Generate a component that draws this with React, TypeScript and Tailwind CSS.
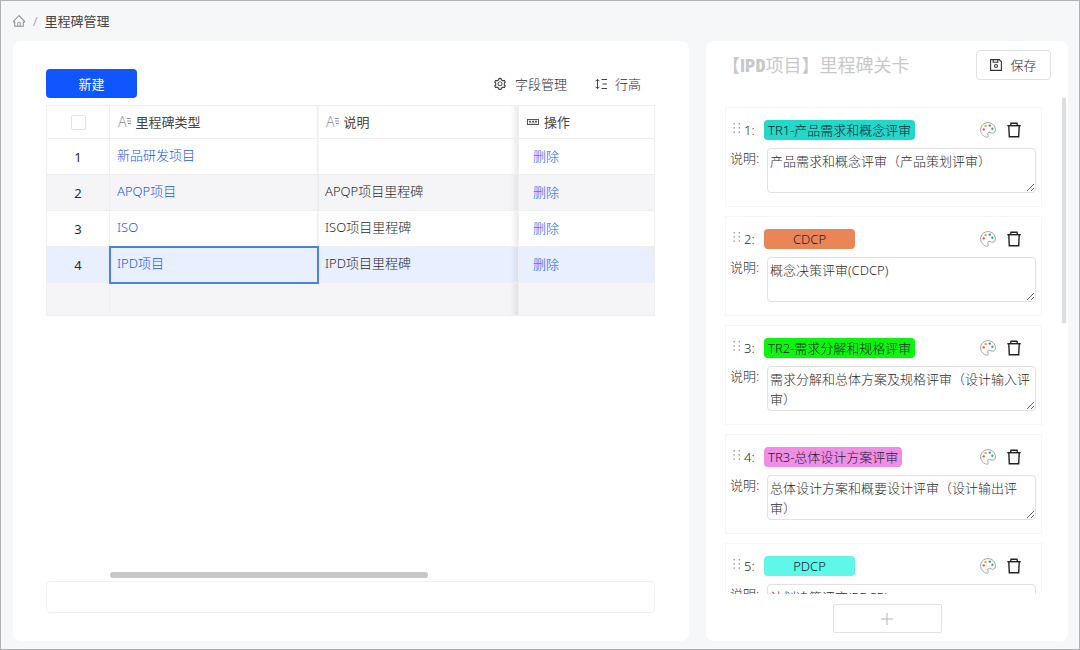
import React, { useState } from 'react';
import { AiOutlineHome, AiOutlineSetting } from 'react-icons/ai';

interface MilestoneType {
  id: number;
  name: string;
  remark: string;
}

interface Gate {
  id: number;
  name: string;
  color: string;
  remark: string;
}

const milestoneTypes: MilestoneType[] = [
  { id: 1, name: '新品研发项目', remark: '' },
  { id: 2, name: 'APQP项目', remark: 'APQP项目里程碑' },
  { id: 3, name: 'ISO', remark: 'ISO项目里程碑' },
  { id: 4, name: 'IPD项目', remark: 'IPD项目里程碑' },
];

const gates: Gate[] = [
  { id: 1, name: 'TR1-产品需求和概念评审', color: 'bg-[#22d8c8]', remark: '产品需求和概念评审（产品策划评审）' },
  { id: 2, name: 'CDCP', color: 'bg-[#ea8558]', remark: '概念决策评审(CDCP)' },
  { id: 3, name: 'TR2-需求分解和规格评审', color: 'bg-[#0af60a]', remark: '需求分解和总体方案及规格评审（设计输入评审）' },
  { id: 4, name: 'TR3-总体设计方案评审', color: 'bg-[#f08ee6]', remark: '总体设计方案和概要设计评审（设计输出评审）' },
  { id: 5, name: 'PDCP', color: 'bg-[#5ff7ea]', remark: '计划决策评审(PDCP)' },
];

const TextFieldIcon: React.FC = () => (
  <span className="flex items-start text-[#999]" aria-hidden="true">
    <span className="text-sm leading-3 font-light">A</span>
    <svg className="h-2.5 w-1" viewBox="0 0 4 10" stroke="currentColor" strokeWidth="1">
      <path d="M0 2.5h4M0 5h4M1 7.5h3" />
    </svg>
  </span>
);

const ActionFieldIcon: React.FC = () => (
  <svg className="h-3 w-3" viewBox="0 0 12 12" fill="none" stroke="#555" aria-hidden="true">
    <rect x="0.5" y="3.5" width="11" height="5" />
    <path d="M2 5.5h2M5 5.5h2M8 5.5h2" strokeWidth="1.4" />
    <path d="M2 7h8" strokeWidth="0.5" />
  </svg>
);

const RowHeightIcon: React.FC = () => (
  <svg className="h-3 w-3" viewBox="0 0 12 12" fill="none" stroke="#444" strokeWidth="1" aria-hidden="true">
    <path d="M2.5 1.5v9M0.5 3.3l2-2 2 2M0.5 8.7l2 2 2-2" />
    <path d="M6.5 1.5H12M7.5 6H12M6.5 10.5H12" />
  </svg>
);

const SaveIcon: React.FC = () => (
  <svg className="h-3 w-3" viewBox="0 0 12 12" fill="none" stroke="#333" strokeWidth="1.1" aria-hidden="true">
    <path d="M0.6 0.6h8.6l2.2 2.2v8.6H0.6z" />
    <path d="M3.2 0.6v2.6h4.6V0.6" />
    <circle cx="6" cy="7" r="1.5" />
  </svg>
);

const DragIcon: React.FC = () => (
  <svg className="h-3 w-2" viewBox="0 0 8 12" fill="#999" aria-hidden="true">
    {[1, 5.2, 9.4].map((y) => (
      <g key={y}>
        <rect x="0.5" y={y} width="1.4" height="1.4" />
        <rect x="5.6" y={y} width="1.4" height="1.4" />
      </g>
    ))}
  </svg>
);

const PaletteIcon: React.FC = () => (
  <svg className="h-4 w-4" viewBox="0 0 16 16" fill="none" aria-hidden="true">
    <path
      d="M8 0.6C3.9 0.6 0.6 3.8 0.6 7.8c0 3.6 2.8 6.8 6.2 7.4 1 .2 1.5-.5 1.3-1.4-.3-1.3-.8-2.5.3-3.3.9-.6 2 .1 3.1.5 1.5.6 3.9.2 3.9-3.2C15.4 3.8 12.1.6 8 .6z"
      stroke="#8c8c8c"
      strokeWidth="0.8"
    />
    <circle cx="3.7" cy="7.4" r="1.2" fill="#e25b52" />
    <circle cx="5.6" cy="3.9" r="1.2" fill="#efa43a" />
    <circle cx="9.8" cy="3.6" r="1.2" fill="#3a86c0" />
    <circle cx="12.4" cy="6.7" r="1.2" fill="#35b08f" />
  </svg>
);

const TrashIcon: React.FC = () => (
  <svg className="h-4 w-4" viewBox="0 0 16 16" fill="none" stroke="#222" strokeWidth="1.4" aria-hidden="true">
    <path d="M1.3 3.7h13.4" />
    <path d="M4.6 3.5l.4-2.3h6l.4 2.3" />
    <path d="M2.8 3.7l.5 11h9.4l.5-11" />
  </svg>
);

const cell = 'border border-[#efeff1]';
const pinShadow = 'bg-[linear-gradient(to_left,#00000014,transparent_8px)]';

const MilestoneTable: React.FC<{ selected: number; onSelect: (id: number) => void }> = ({ selected, onSelect }) => (
  <table className="w-full table-fixed border-collapse">
    <colgroup>
      <col className="w-[63px]" />
      <col className="w-[208px]" />
      <col />
      <col className="w-[136px]" />
    </colgroup>
    <thead>
      <tr className="h-[33px] text-[#444]">
        <th className={cell}>
          <input
            type="checkbox"
            aria-label="全选"
            className="mx-auto block h-[15px] w-[15px] appearance-none rounded-xs border border-[#e2e3e5] bg-white"
          />
        </th>
        <th className={`${cell} px-2 font-normal`}>
          <div className="flex items-center gap-[5px]"><TextFieldIcon />里程碑类型</div>
        </th>
        <th className={`${cell} ${pinShadow} px-2 font-normal`}>
          <div className="flex items-center gap-[5px]"><TextFieldIcon />说明</div>
        </th>
        <th className={`${cell} px-2 font-normal`}>
          <div className="flex items-center gap-[5px]"><ActionFieldIcon />操作</div>
        </th>
      </tr>
    </thead>
    <tbody>
      {milestoneTypes.map((row) => {
        const isSelected = row.id === selected;
        return (
          <tr
            key={row.id}
            onClick={() => onSelect(row.id)}
            className={`h-9 ${isSelected ? 'bg-[#e8efff]' : 'even:bg-[#f5f5f8]'}`}
          >
            <td className={`${cell} text-center font-normal`}>{row.id}</td>
            <td className={`${cell} px-[7px] pb-1 ${isSelected ? 'outline-2 -outline-offset-1 outline-[#4583e6]' : ''}`}>
              <a href="#" className="text-[#1a58ee]">{row.name}</a>
            </td>
            <td className={`${cell} ${pinShadow} px-[7px] pb-1`}>{row.remark}</td>
            <td className={`${cell} px-3.5 pb-0.5`}>
              <button type="button" className="text-[#1a58ee]">删除</button>
            </td>
          </tr>
        );
      })}
      <tr className="h-[33px] bg-[#f5f5f8]">
        <td className={cell}></td>
        <td className="border-b border-[#efeff1]"></td>
        <td className={`border-b border-[#efeff1] ${pinShadow}`}></td>
        <td className={cell}></td>
      </tr>
    </tbody>
  </table>
);

const GateCard: React.FC<{ gate: Gate }> = ({ gate }) => (
  <li className="h-[100px] border border-[#f6f6f7] pt-3 pr-[5px] pl-1">
    <div className="flex h-5 items-center">
      <span className="flex w-[34px] items-center gap-[3px] pl-[3px]">
        <span className="pb-1"><DragIcon /></span>
        <span>{gate.id}:</span>
      </span>
      <span className={`min-w-[91px] rounded-sm px-1 text-center leading-5 text-[#16222b] ${gate.color}`}>{gate.name}</span>
      <div className="ml-auto flex gap-2.5 pr-3.5">
        <button type="button" aria-label="选择颜色"><PaletteIcon /></button>
        <button type="button" aria-label="删除关卡"><TrashIcon /></button>
      </div>
    </div>
    <div className="mt-2 flex">
      <label htmlFor={`gate-${gate.id}`} className="w-[37px] shrink-0 leading-5 whitespace-nowrap">说明:</label>
      <textarea
        id={`gate-${gate.id}`}
        defaultValue={gate.remark}
        className="block h-[45px] min-w-0 flex-1 overflow-hidden rounded-sm border border-[#e0e1e3] bg-white px-0.5 py-0.5 leading-5"
      />
    </div>
  </li>
);

const App: React.FC = () => {
  const [selected, setSelected] = useState(4);

  return (
    <div className="flex h-screen flex-col border border-[#b0b1b4] bg-[#f6f7f9] font-['Noto_Sans','Noto_Sans_CJK_SC',sans-serif] text-[13px] leading-5 font-light text-[#2b2b2b]">
      {/* Breadcrumb */}
      <nav className="flex h-10 shrink-0 items-center gap-[7px] px-[11px]" aria-label="breadcrumb">
        <a href="#" aria-label="首页"><AiOutlineHome className="h-3.5 w-3.5 text-[#8a8c90]" /></a>
        <span className="text-[#888]">/</span>
        <span className="font-normal text-[#444]">里程碑管理</span>
      </nav>

      <main className="flex min-h-0 flex-1 gap-[17px] px-3 pr-[11px] pb-2">
        {/* Milestone types */}
        <section className="flex min-w-0 flex-1 flex-col rounded-lg bg-white pt-7 pr-[34px] pb-7 pl-[33px]">
          <div className="flex h-[29px] shrink-0 items-center gap-7 pr-3.5">
            <button type="button" className="mr-auto h-[29px] w-[91px] rounded-sm bg-[#0f56ff] font-normal text-white">新建</button>
            <button type="button" className="flex items-center gap-2">
              <AiOutlineSetting className="h-3.5 w-3.5" />字段管理
            </button>
            <button type="button" className="flex items-center gap-2">
              <RowHeightIcon />行高
            </button>
          </div>
          <div className="mt-[7px] min-h-0 flex-1">
            <MilestoneTable selected={selected} onSelect={setSelected} />
          </div>
          <div className="pl-16">
            <div className="h-1.5 w-7/12 rounded-full bg-[#c6c6c6]"></div>
          </div>
          <div className="mt-[3px] h-8 shrink-0 rounded-sm border border-[#f0f1f2]"></div>
        </section>

        {/* Gates of the selected type */}
        <aside className="relative flex w-[362px] shrink-0 flex-col rounded-lg bg-white pb-2">
          <header className="flex h-[57px] shrink-0 items-start justify-between pt-[9px] pr-[17px] pl-4">
            <h2 className="text-lg leading-[30px] font-normal text-[#c8c8c8]">
              【<span className="font-['Roboto_Condensed','Roboto',sans-serif] font-black">IPD</span>项目】里程碑关卡
            </h2>
            <button type="button" className="flex h-[30px] w-[75px] items-center justify-center gap-2 rounded-sm border border-[#e0e1e3]">
              <SaveIcon />保存
            </button>
          </header>
          <ul className="flex min-h-0 flex-1 flex-col gap-[9px] overflow-hidden pt-[9px] pr-[26px] pl-[19px] [&>li]:shrink-0">
            {gates.map((gate) => (
              <GateCard key={gate.id} gate={gate} />
            ))}
          </ul>
          <div className="absolute top-[57px] right-0.5 h-[225px] w-1 bg-[#dcdde0]"></div>
          <button
            type="button"
            aria-label="新增关卡"
            className="mx-auto mt-2.5 flex h-[29px] w-[109px] shrink-0 items-center justify-center rounded-xs border border-[#e0e1e3]"
          >
            <svg className="h-3 w-3" viewBox="0 0 12 12" stroke="#b5b5b5" strokeWidth="1" aria-hidden="true">
              <path d="M6 0v12M0 6h12" />
            </svg>
          </button>
        </aside>
      </main>
    </div>
  );
};

export default App;
